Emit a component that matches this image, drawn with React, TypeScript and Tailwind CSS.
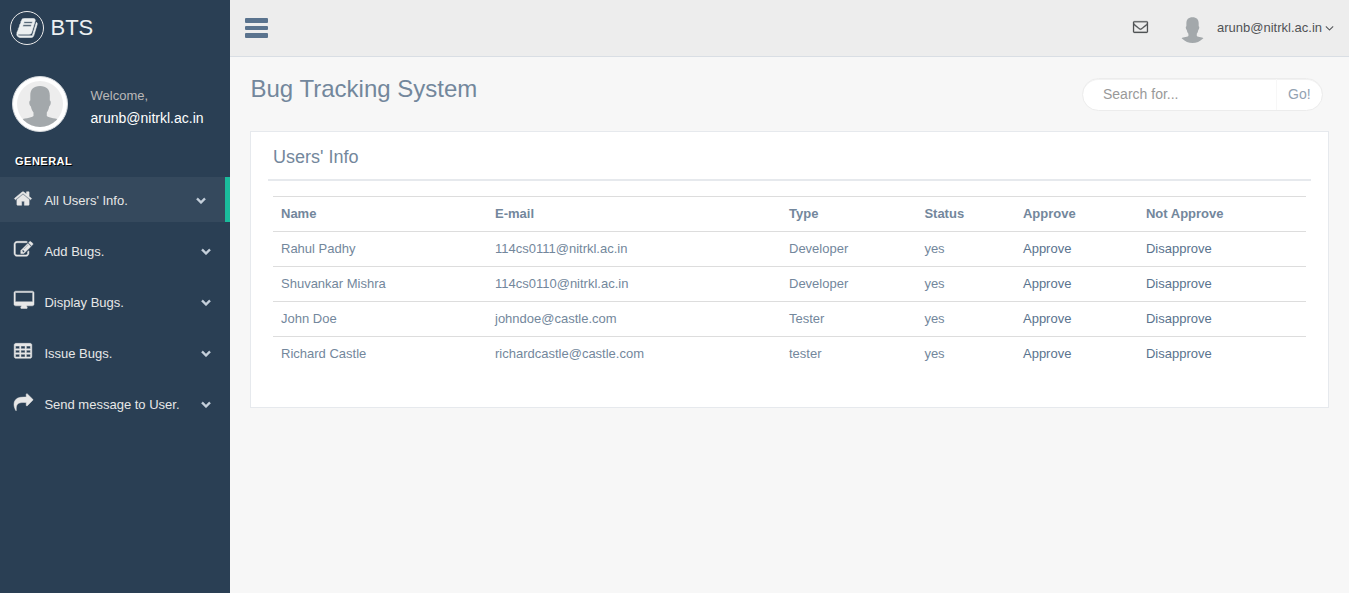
import React from 'react';

type GlyphProps = { d: string; viewBox?: string; className?: string };

const Glyph = ({ d, viewBox = '0 0 1792 1792', className = '' }: GlyphProps) => (
  <svg
    viewBox={viewBox}
    className={`shrink-0 overflow-visible ${className}`}
    fill="currentColor"
    fillRule="evenodd"
    stroke="currentColor"
    strokeWidth="0"
    aria-hidden="true"
  >
    <path d={d} className="[stroke-width:inherit]" />
  </svg>
);

const cell = (x: number, y: number) =>
  `M${x + 32} ${y}h320q14 0 23 9t9 23v192q0 14-9 23t-23 9h-320q-14 0-23-9t-9-23v-192q0-14 9-23t23-9z`;

const paths = {
  home: 'M1472 992v480q0 26-19 45t-45 19h-384v-384h-256v384h-384q-26 0-45-19t-19-45v-480q0-1 .5-3t.5-3l575-474 575 474q1 2 1 6zm223-69l-62 74q-8 9-21 11h-3q-13 0-21-7l-692-577-692 577q-12 8-24 7-13-2-21-11l-62-74q-8-10-7-23.5t11-21.5l719-599q32-26 76-26t76 26l244 204v-195q0-14 9-23t23-9h192q14 0 23 9t9 23v408l219 182q10 8 11 21.5t-7 23.5z',
  edit: 'M888 1184l116-116-152-152-116 116v56h96v96h56zm440-720q-16-16-33 1l-350 350q-17 17-1 33t33-1l350-350q17-17 1-33zm80 594v190q0 119-84.5 203.5t-203.5 84.5h-832q-119 0-203.5-84.5t-84.5-203.5v-832q0-119 84.5-203.5t203.5-84.5h832q63 0 117 25 15 7 18 23 3 17-9 29l-49 49q-14 14-32 8-23-6-45-6h-832q-66 0-113 47t-47 113v832q0 66 47 113t113 47h832q66 0 113-47t47-113v-126q0-13 9-22l64-64q15-15 35-7t20 29zm-96-738l288 288-672 672h-288v-288zm444 132l-92 92-288-288 92-92q28-28 68-28t68 28l152 152q28 28 28 68t-28 68z',
  desktop:
    'M1728 992v-832q0-13-9.5-22.5t-22.5-9.5h-1600q-13 0-22.5 9.5t-9.5 22.5v832q0 13 9.5 22.5t22.5 9.5h1600q13 0 22.5-9.5t9.5-22.5zm128-832v1088q0 66-47 113t-113 47h-544q0 37 16 77.5t32 71 16 43.5q0 26-19 45t-45 19h-512q-26 0-45-19t-19-45q0-14 16-44t32-70 16-78h-544q-66 0-113-47t-47-113v-1088q0-66 47-113t113-47h1600q66 0 113 47t47 113z',
  table:
    'M1728 288v1088q0 66-47 113t-113 47h-1344q-66 0-113-47t-47-113v-1088q0-66 47-113t113-47h1344q66 0 113 47t47 113z' +
    [192, 704, 1216].map((x) => [384, 768, 1152].map((y) => cell(x, y)).join('')).join(''),
  share:
    'M1792 640q0 26-19 45l-512 512q-19 19-45 19t-45-19-19-45v-256h-224q-98 0-175.5 6t-154 21.5-133 42.5-105.5 69.5-80 101-48.5 138.5-17.5 181q0 55 5 123 0 6 2.5 23.5t2.5 26.5q0 15-8.5 25t-23.5 10q-16 0-28-17-7-9-13-22t-13.5-30-10.5-24q-127-285-127-451 0-199 53-333 162-403 875-403h224v-256q0-26 19-45t45-19 45 19l512 512q19 19 19 45z',
  chevron:
    'M1683 808l-742 741q-19 19-45 19t-45-19l-742-741q-19-19-19-45.5t19-45.5l166-165q19-19 45-19t45 19l531 531 531-531q19-19 45-19t45 19l166 165q19 19 19 45.5t-19 45.5z',
  book: 'M1703 478q40 57 18 129l-275 906q-19 64-76.5 107.5t-122.5 43.5h-923q-77 0-148.5-53.5t-99.5-131.5q-24-67-2-127 0-4 3-27t4-37q1-8-3-21.5t-3-19.5q2-11 8-21t16.5-23.5 16.5-23.5q23-38 45-91.5t30-91.5q3-10 .5-30t-.5-28q3-11 17-28t17-23q21-36 42-92t25-90q1-9-2.5-32t.5-28q4-13 22-30.5t22-22.5q19-26 42.5-84.5t27.5-96.5q1-8-3-25.5t-2-26.5q2-8 9-18t18-23 17-21q8-12 16.5-30.5t15-35 16-36 19.5-32 26.5-23.5 36-11.5 47.5 5.5l-1 3q38-9 51-9h761q74 0 114 56t18 130l-274 906q-36 119-71.5 153.5t-128.5 34.5h-869q-27 0-38 15-11 16-1 43 24 70 144 70h923q29 0 56-15.5t35-41.5l300-987q7-22 5-57 38 15 59 43zm-1064 2q-4 13 2 22.5t20 9.5h608q13 0 25.5-9.5t16.5-22.5l21-64q4-13-2-22.5t-20-9.5h-608q-13 0-25.5 9.5t-16.500 22.500zm-83 256q-4 13 2 22.500t20 9.500h608q13 0 25.500-9.500t16.500-22.500l21-64q4-13-2-22.500t-20-9.500h-608q-13 0-25.500 9.500t-16.500 22.500z',
  envelope:
    'M1664 1504v-768q-32 36-69 66-268 206-426 338-51 43-83 67t-86.5 48.5-102.5 24.5h-2q-48 0-102.5-24.5t-86.5-48.5-83-67q-158-132-426-338-37-30-69-66v768q0 13 9.5 22.5t22.5 9.5h1472q13 0 22.5-9.5t9.5-22.5zm0-1051v-24.5l-.5-13-3-12.5-5.5-9-9-7.5-14-2.5h-1472q-13 0-22.5 9.5t-9.5 22.5q0 168 147 284 193 152 401 317 6 5 35 29.5t46 37.5 44.5 31.5 50.5 27.5 43 9h2q20 0 43-9t50.5-27.5 44.5-31.5 46-37.5 35-29.5q208-165 401-317 54-43 100.5-115.5t46.5-131.5zm128-37v1088q0 66-47 113t-113 47h-1472q-66 0-113-47t-47-113v-1088q0-66 47-113t113-47h1472q66 0 113 47t47 113z',
  angle:
    'M1395 736q0 13-10 23l-466 466q-10 10-23 10t-23-10l-466-466q-10-10-10-23t10-23l50-50q10-10 23-10t23 10l393 393 393-393q10-10 23-10t23 10l50 50q10 10 10 23z',
};

const Avatar = ({ className = '' }: { className?: string }) => (
  <svg viewBox="0 0 46 46" className={`rounded-full ${className}`} aria-hidden="true">
    <rect width="46" height="46" fill="#ededed" />
    <path
      fill="#a3a8ab"
      d="M23 5c6.500 0 9.800 3.500 9.800 9.500v5c1.500.3 1.300 4.500-.6 6-.6 3-1.200 4.500-2.400 6V35c2.500 2.200 9.500 2 14.200 4.500V46H2v-6.500C6.700 37 14 37.200 16.500 35v-3.500c-1.200-1.500-2-3-2.600-6-1.900-1.500-2.100-5.700-.6-6v-5C13.300 8.500 16.500 5 23 5z"
    />
  </svg>
);

const menu = [
  { label: "All Users' Info.", d: paths.home, viewBox: '64 0 1664 1792', size: 'h-[19px] w-[18px]' },
  { label: 'Add Bugs.', d: paths.edit, viewBox: '0 0 1792 1792', size: 'h-[19px] w-[19px]' },
  { label: 'Display Bugs.', d: paths.desktop, viewBox: '-64 0 1920 1792', size: 'h-[19px] w-[20px]' },
  { label: 'Issue Bugs.', d: paths.table, viewBox: '64 0 1664 1792', size: 'h-[19px] w-[18px]' },
  { label: 'Send message to User.', d: paths.share, viewBox: '0 0 1792 1792', size: 'h-[19px] w-[19px]' },
];

const users = [
  ['Rahul Padhy', '114cs0111@nitrkl.ac.in', 'Developer', 'yes'],
  ['Shuvankar Mishra', '114cs0110@nitrkl.ac.in', 'Developer', 'yes'],
  ['John Doe', 'johndoe@castle.com', 'Tester', 'yes'],
  ['Richard Castle', 'richardcastle@castle.com', 'tester', 'yes'],
];

const rowClass =
  'grid h-[35px] grid-cols-[214px_294px_135.4px_98.600px_123px_168px] items-center border-t border-[#ddd] [&>*]:pl-2';

const Sidebar = () => (
  <aside className="flex w-[230px] shrink-0 flex-col bg-[#2a3f54] text-[#e7e7e7]">
    <div className="flex h-[57px] items-center pb-[2px] pl-[10px] text-[22px] text-[#ecf0f1]">
      <span className="flex size-[34px] items-center justify-center rounded-full border border-[#eaeaea]">
        <Glyph d={paths.book} className="size-[22px] [stroke-width:50]" />
      </span>
      <span className="ml-[6.500px]">BTS</span>
    </div>
    <div className="flex pt-[19px] pl-[12px]">
      <div className="size-[56px] rounded-full border border-[#d5d9dd] bg-white p-1">
        <Avatar className="size-[46px]" />
      </div>
      <div className="ml-[22.500px] pt-[10px]">
        <div className="text-[13px] leading-[19px] text-[#bab8b8]">Welcome,</div>
        <div className="mt-[3px] text-[14px] leading-[20px] text-white">arunb@nitrkl.ac.in</div>
      </div>
    </div>
    <h3 className="mt-[21px] h-[24px] pl-[15px] text-[11px] leading-[16px] font-bold tracking-[0.5px] text-white [text-shadow:1px_1px_#000]">
      GENERAL
    </h3>
    <nav className="flex flex-col gap-[6px]">
      {menu.map((m, i) => (
        <a
          key={m.label}
          className={`flex h-[45px] items-center pr-[19px] pl-[14.400px] text-[13px] ${
            i === 0 ? 'border-r-[5px] border-[#1abb9c] bg-[#35495d]' : ''
          }`}
        >
          <span className="mb-[2px] w-[30px]">
            <Glyph d={m.d} viewBox={m.viewBox} className={`${m.size} [stroke-width:45]`} />
          </span>
          <span className="flex-1 pt-[3px]">{m.label}</span>
          <Glyph d={paths.chevron} className="mt-[1px] size-[10px] text-[#c4cfda] [stroke-width:70]" />
        </a>
      ))}
    </nav>
  </aside>
);

const TopBar = () => (
  <header className="flex h-[57px] items-center border-b border-[#d9dee4] bg-[#ededed] pr-[15px] pl-[15px] text-[13px] text-[#515356]">
    <div className="flex w-[23px] flex-col gap-[3px]">
      <span className="h-[4.500px] rounded-[1px] bg-[#5a738e]" />
      <span className="h-[4.500px] rounded-[1px] bg-[#5a738e]" />
      <span className="h-[4.500px] rounded-[1px] bg-[#5a738e]" />
    </div>
    <div className="ml-auto flex items-center">
      <Glyph d={paths.envelope} className="mr-[30px] mb-[4px] size-[15px] [stroke-width:30]" />
      <Avatar className="mr-[10px] size-[29px]" />
      <span>arunb@nitrkl.ac.in</span>
      <Glyph d={paths.angle} viewBox="320 0 1152 1792" className="ml-[3px] h-[14px] w-[9px]" />
    </div>
  </header>
);

export default function App() {
  return (
    <div className="flex h-[593px] w-[1349px] overflow-hidden bg-[#f7f7f7] font-['Liberation_Sans',Arial,sans-serif] text-[13px] text-[#73879c]">
      <Sidebar />
      <main className="flex flex-1 flex-col">
        <TopBar />
        <div className="flex h-[74px] justify-between pr-[26px] pl-[20.500px]">
          <h1 className="pt-[14px] text-[24px] leading-9">Bug Tracking System</h1>
          <div className="mt-[21px] flex h-[33px] w-[241px] overflow-hidden rounded-[25px] border border-[#ececec] bg-white text-[14px] leading-[31px] shadow-[inset_0_1px_0_rgba(0,0,0,0.05)]">
            <span className="flex-1 pl-[20px] text-[#999]">Search for...</span>
            <span className="w-[46px] border-l border-[#f7f7f7] pl-[11px] text-[#93a2b2]">Go!</span>
          </div>
        </div>
        <section className="mr-5 ml-5 h-[277px] border border-[#e6e9ed] bg-white px-[17px]">
          <h2 className="h-[49px] border-b-2 border-[#e6e9ed] pt-[13px] pl-[5px] text-[18px] leading-6">Users' Info</h2>
          <div className="mx-[5px] mt-[15px]">
            <div className={`${rowClass} font-bold`}>
              {['Name', 'E-mail', 'Type', 'Status', 'Approve', 'Not Approve'].map((h) => (
                <span key={h}>{h}</span>
              ))}
            </div>
            {users.map((u) => (
              <div key={u[0]} className={rowClass}>
                {u.map((v) => (
                  <span key={v}>{v}</span>
                ))}
                <a className="text-[#5a738e]">Approve</a>
                <a className="text-[#5a738e]">Disapprove</a>
              </div>
            ))}
          </div>
        </section>
      </main>
    </div>
  );
}
